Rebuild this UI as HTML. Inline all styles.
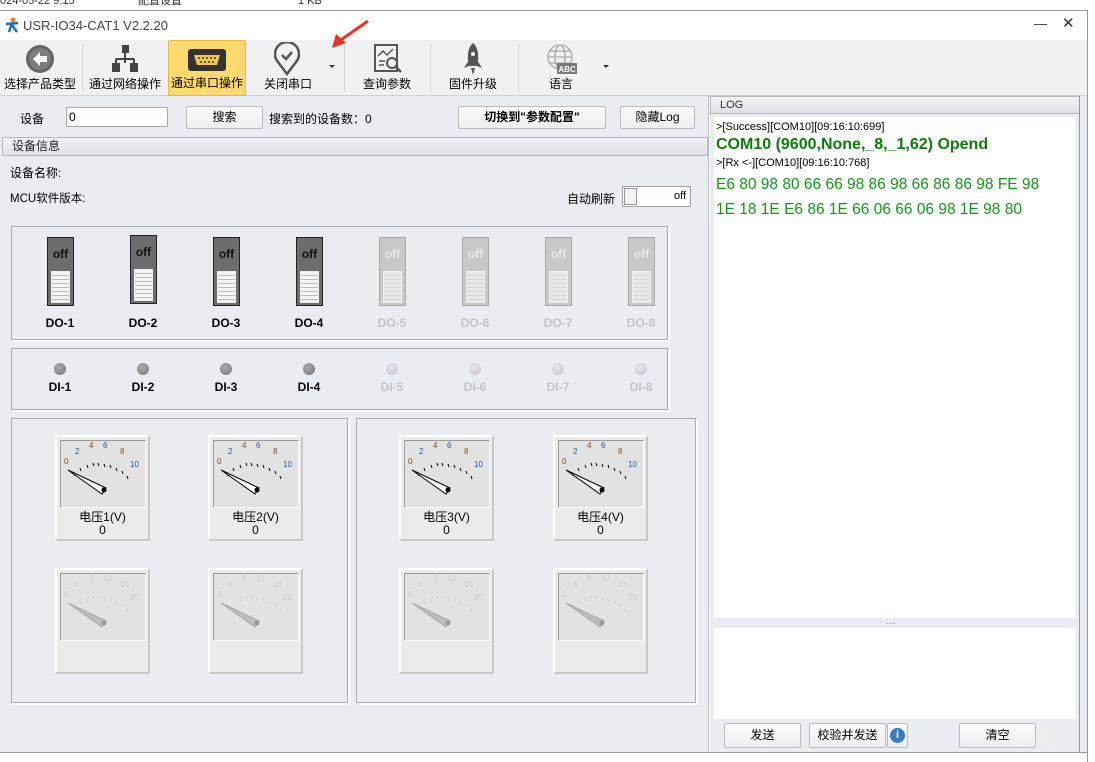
<!DOCTYPE html><html><head><meta charset="utf-8"><style>
*{box-sizing:border-box;margin:0;padding:0}
body{width:1095px;height:761px;position:relative;overflow:hidden;background:#fff;font-family:"Liberation Sans","Noto Sans CJK SC",sans-serif;font-size:12px;color:#000}
.a{position:absolute}
.btn{position:absolute;border:1px solid #b8bcc2;border-radius:2px;background:linear-gradient(#fafafa,#eceef0);text-align:center;font-size:12px;line-height:21px}
.box{position:absolute;border:1px solid #a9acb0;border-right-color:#fff;border-bottom-color:#fff;box-shadow:inset -1px -1px 0 #a9acb0, 1px 1px 0 #fff}
.tb{position:absolute;top:40px;height:56px;text-align:center;font-size:12px}
.tb span{position:absolute;bottom:4px;left:0;right:0}
.sep{position:absolute;top:44px;width:1px;height:48px;background:#d4d6d9}
.sw{position:absolute;width:27px;height:69px;background:#6d6d6d;border:1px solid #222}
.sw b{position:absolute;top:9px;left:0;right:0;text-align:center;font-size:12px;color:#111}
.sw i{position:absolute;left:3px;top:33px;width:19px;height:32px;background:repeating-linear-gradient(#f4f4f4 0 3px,#bbb 3px 4px);border:1px solid #eee}
.sw.d{background:#c8c8c8;border-color:#aaa}.sw.d b{color:#e8e8e8}.sw.d i{background:repeating-linear-gradient(#e8e8e8 0 3px,#d4d4d4 3px 4px)}
.lbl{position:absolute;font-weight:bold;font-size:12px;width:60px;text-align:center}
.led{position:absolute;width:12px;height:12px;border-radius:50%;background:radial-gradient(circle at 40% 35%,#aaa,#777);}
.led.d{background:radial-gradient(circle at 40% 35%,#e6e6e6,#c4c4c4)}
.g{position:absolute;width:95px;height:106px;background:#ebebeb;border:2px solid #fff;border-right-color:#c8c8c8;border-bottom-color:#c8c8c8}
.g .f{position:absolute;left:3px;top:3px;width:86px;height:68px;background:#e2e2e2;border:1px solid #9a9a9a;border-bottom-color:#fff;border-right-color:#fff}
.g .t{position:absolute;top:74px;left:0;right:0;text-align:center;font-size:12px;line-height:13px}
</style></head><body>
<div class="a" style="left:0;top:0;width:1095px;height:10px;font-size:11px;color:#333;line-height:6px;overflow:hidden">
<span class="a" style="left:0;top:-2px">024-05-22 9:15</span><span class="a" style="left:138px;top:-2px">配置设置</span><span class="a" style="left:298px;top:-2px">1 KB</span></div>
<div class="a" style="left:0;top:10px;width:1088px;height:1px;background:#999"></div>
<div class="a" style="left:1087px;top:10px;width:1px;height:752px;background:#999"></div>
<div class="a" style="left:0;top:752px;width:1088px;height:1px;background:#999"></div>
<div class="a" style="left:0;top:11px;width:1087px;height:29px;background:#fff"></div>
<svg class="a" style="left:4px;top:17px" width="16" height="16"><circle cx="9" cy="3" r="2.5" fill="#f08020"/><path d="M2 7 L14 6 M8 6 L5 15 M8 8 L13 15" stroke="#1a6fc0" stroke-width="2.5" fill="none"/></svg>
<div class="a" style="left:23px;top:18px;font-size:13px;color:#444">USR-IO34-CAT1 V2.2.20</div>
<div class="a" style="left:1034px;top:16px;font-size:13px;color:#333">—</div>
<div class="a" style="left:1062px;top:14px;font-size:15px;color:#333">✕</div>
<div class="a" style="left:0;top:40px;width:1087px;height:56px;background:#f0f1f3;border-bottom:1px solid #d0d2d5"></div>
<div class="tb" style="left:0;width:80px"><svg class="a" style="left:25px;top:4px" width="30" height="30"><circle cx="15" cy="15" r="14" fill="#666"/><circle cx="15" cy="15" r="11" fill="#7d7d7d"/><path d="M8 15 L15 8 V12 H22 V18 H15 V22 Z" fill="#fff"/></svg><span>选择产品类型</span></div>
<div class="sep" style="left:82px"></div>
<div class="tb" style="left:84px;width:82px"><svg class="a" style="left:28px;top:4px" width="26" height="30"><rect x="10" y="1" width="7" height="8" fill="#444"/><path d="M13 9V15M4 15H22M4 15V19M22 15V19M13 15V19" stroke="#444" stroke-width="2"/><rect x="0" y="19" width="8" height="9" fill="#444"/><rect x="18" y="19" width="8" height="9" fill="#444"/></svg><span>通过网络操作</span></div>
<div class="tb" style="left:168px;width:78px;background:#fdd96e;border:1px solid #e6b84a;border-radius:2px"><svg class="a" style="left:18px;top:7px" width="40" height="24"><rect x="1" y="1" width="38" height="22" rx="3" fill="#333"/><path d="M7 7H33L30 17H10Z" fill="#f3c64b"/><g fill="#333"><circle cx="12" cy="10" r="1"/><circle cx="16" cy="10" r="1"/><circle cx="20" cy="10" r="1"/><circle cx="24" cy="10" r="1"/><circle cx="28" cy="10" r="1"/><circle cx="14" cy="14" r="1"/><circle cx="18" cy="14" r="1"/><circle cx="22" cy="14" r="1"/><circle cx="26" cy="14" r="1"/></g></svg><span>通过串口操作</span></div>
<div class="tb" style="left:248px;width:80px"><svg class="a" style="left:26px;top:2px" width="26" height="34"><path d="M13 32 L4 20 A12 12 0 1 1 22 20 Z" fill="none" stroke="#555" stroke-width="2.5"/><path d="M8 13 L12 17 L18 10" stroke="#555" stroke-width="2.5" fill="none"/></svg><span>关闭串口</span></div>
<div class="a" style="left:329px;top:65px;border:3px solid transparent;border-top:3px solid #333"></div>
<svg class="a" style="left:330px;top:18px" width="42" height="32"><path d="M38 3 L8 24" stroke="#e8332a" stroke-width="3"/><path d="M2 30 L6 16 L16 25 Z" fill="#e8332a"/></svg>
<div class="sep" style="left:344px"></div>
<div class="tb" style="left:348px;width:78px"><svg class="a" style="left:25px;top:4px" width="30" height="30"><path d="M2 1H24V27H2Z" fill="none" stroke="#555" stroke-width="2"/><path d="M5 12L10 7L14 11L20 5M6 17H12M6 21H11" stroke="#555" stroke-width="1.5" fill="none"/><circle cx="19" cy="19" r="5" fill="#f0f1f3" stroke="#555" stroke-width="2"/><path d="M23 23L28 28" stroke="#555" stroke-width="2.5"/></svg><span>查询参数</span></div>
<div class="sep" style="left:430px"></div>
<div class="tb" style="left:432px;width:82px"><svg class="a" style="left:30px;top:2px" width="22" height="34"><path d="M11 1C17 6 17 16 15 24H7C5 16 5 6 11 1Z" fill="#555"/><path d="M7 18L2 26L7 24ZM15 18L20 26L15 24Z" fill="#555"/><path d="M9 26L11 33L13 26Z" fill="#555"/><circle cx="11" cy="12" r="2" fill="#f0f1f3"/></svg><span>固件升级</span></div>
<div class="sep" style="left:518px"></div>
<div class="tb" style="left:520px;width:82px"><svg class="a" style="left:25px;top:3px" width="34" height="34"><circle cx="15" cy="14" r="12" fill="none" stroke="#aaa" stroke-width="1.3"/><ellipse cx="15" cy="14" rx="5" ry="12" fill="none" stroke="#aaa" stroke-width="1.3"/><path d="M3 14H27M5 8H25M5 20H25" stroke="#aaa" stroke-width="1.3"/><rect x="12" y="20" width="20" height="11" fill="#7a7a7a"/><text x="13.5" y="29" font-size="8" fill="#fff" font-family="Liberation Sans" font-weight="bold">ABC</text></svg><span>语言</span></div>
<div class="a" style="left:603px;top:65px;border:3px solid transparent;border-top:3px solid #333"></div>

<div class="a" style="left:0;top:96px;width:709px;height:656px;background:#e9ecf0;border-right:1px solid #b8bbbf"></div>
<div class="a" style="left:20px;top:110px">设备</div>
<div class="a" style="left:66px;top:107px;width:102px;height:20px;background:#fff;border:1px solid #a8abb0;padding-left:2px;line-height:18px">0</div>
<div class="btn" style="left:186px;top:106px;width:77px;height:23px">搜索</div>
<div class="a" style="left:269px;top:110px">搜索到的设备数：0</div>
<div class="btn" style="left:458px;top:106px;width:148px;height:23px;font-weight:bold">切换到"参数配置"</div>
<div class="btn" style="left:620px;top:106px;width:75px;height:23px">隐藏Log</div>
<div class="a" style="left:2px;top:137px;width:706px;height:19px;background:linear-gradient(#f2f3f5,#dfe2e6);border:1px solid #b5b8bc;padding-left:9px;line-height:17px;color:#222">设备信息</div>
<div class="a" style="left:10px;top:164px">设备名称:</div>
<div class="a" style="left:10px;top:190px;font-size:11.5px">MCU软件版本:</div>
<div class="a" style="left:567px;top:190px">自动刷新</div>
<div class="a" style="left:622px;top:186px;width:69px;height:21px;background:#fff;border:1px solid #a0a3a8"><div class="a" style="left:1px;top:1px;width:13px;height:17px;border:1px solid #999;background:#f4f4f4"></div><span class="a" style="right:4px;top:3px;font-size:11px">off</span></div>

<div class="box" style="left:11px;top:226px;width:658px;height:115px"></div>
<div class="box" style="left:11px;top:348px;width:658px;height:63px"></div>
<div class="box" style="left:11px;top:418px;width:338px;height:286px"></div>
<div class="box" style="left:356px;top:418px;width:341px;height:286px"></div>
<div id="dyn"></div>

<div class="a" style="left:710px;top:96px;width:377px;height:656px;background:#e9ecf0"></div>
<div class="a" style="left:710px;top:96px;width:370px;height:18px;background:linear-gradient(#f2f3f5,#dfe2e6);border:1px solid #b5b8bc;padding-left:9px;line-height:16px;font-size:11px;color:#333">LOG</div>
<div class="a" style="left:1079px;top:96px;width:1px;height:657px;background:#999"></div>
<div class="a" style="left:714px;top:117px;width:362px;height:501px;background:#fff;padding:4px 2px;font-size:11px">
<div style="line-height:13px">&gt;[Success][COM10][09:16:10:699]</div>
<div style="color:#0a7d0a;font-weight:bold;font-size:16px;line-height:22px">COM10 (9600,None,_8,_1,62) Opend</div>
<div style="line-height:13px;margin-top:1px">&gt;[Rx &lt;-][COM10][09:16:10:768]</div>
<div style="color:#14961a;font-size:15.5px;line-height:25px;margin-top:2px">E6 80 98 80 66 66 98 86 98 66 86 86 98 FE 98<br>1E 18 1E E6 86 1E 66 06 66 06 98 1E 98 80</div></div>
<div class="a" style="left:886px;top:616px;font-size:9px;color:#888">....</div>
<div class="a" style="left:714px;top:628px;width:362px;height:91px;background:#fff"></div>
<div class="btn" style="left:724px;top:723px;width:77px;height:25px;line-height:23px">发送</div>
<div class="btn" style="left:809px;top:723px;width:77px;height:25px;line-height:23px">校验并发送</div>
<div class="btn" style="left:887px;top:723px;width:21px;height:25px"><div class="a" style="left:2px;top:4px;width:15px;height:15px;border-radius:50%;background:#3a7bc0;color:#fff;font-weight:bold;font-size:11px;line-height:15px">i</div></div>
<div class="btn" style="left:959px;top:723px;width:77px;height:25px;line-height:23px">清空</div>
<div class="a" style="left:1038px;top:729px;width:16px;height:16px;background:#eceef0"></div>

<script>
(function(){
var h='';
var xs=[60,143,226,309,392,475,558,641];
for(var i=0;i<8;i++){var d=i>=4?' d':'';
var ty=(i==1)?235:237;
h+='<div class="sw'+d+'" style="left:'+(xs[i]-13)+'px;top:'+ty+'px"><b>off</b><i></i></div>';
h+='<div class="lbl" style="left:'+(xs[i]-30)+'px;top:316px;'+(d?'color:#c2c4c8':'')+'">DO-'+(i+1)+'</div>';
h+='<div class="led'+d+'" style="left:'+(xs[i]-6)+'px;top:363px"></div>';
h+='<div class="lbl" style="left:'+(xs[i]-30)+'px;top:380px;'+(d?'color:#c2c4c8':'')+'">DI-'+(i+1)+'</div>';}
function gauge(x,y,n,dis){
var lbl=dis?['0','4','8','12','16','20']:['0','2','4','6','8','10'];
var c=dis?'#ccc':'#000';
var s='<svg class="a" style="left:3px;top:3px" width="86" height="68">';
var pts=[[4,24],[15,14],[29,8],[43,8],[60,14],[70,27]];
var tk=[[14,33],[20,28],[27,25],[33,23],[38,23],[44,24],[50,25],[56,28],[62,31],[67,36]];
tk.forEach(function(p){s+='<line x1="'+p[0]+'" y1="'+p[1]+'" x2="'+(p[0]+1)+'" y2="'+(p[1]+3)+'" stroke="'+c+'" stroke-width="1"/>';});
pts.forEach(function(p,j){s+='<text x="'+p[0]+'" y="'+p[1]+'" font-size="8" fill="'+(dis?'#ccc':(j%2?'#2a5d9a':'#8a4a1a'))+'" font-family="Liberation Sans">'+lbl[j]+'</text>';});
if(dis)s+='<path d="M8 30 L46 48 L42 54 Z" fill="#bdbdbd" stroke="#aaa"/><circle cx="44" cy="50" r="2.5" fill="#999"/>';
else s+='<path d="M8 30 L46 48 L42 54 Z" fill="#fff" stroke="#000"/><circle cx="44" cy="50" r="2.5" fill="#000"/>';
s+='</svg>';
var t=n?'<div class="t">电压'+n+'(V)<br>0</div>':'';
return '<div class="g" style="left:'+x+'px;top:'+y+'px"><div class="f"></div>'+s+t+'</div>';}
var gx=[55,208,399,553];
for(var k=0;k<4;k++){h+=gauge(gx[k],435,k+1,false);h+=gauge(gx[k],568,0,true);}
document.getElementById('dyn').innerHTML=h;
})();
</script>
</body></html>
